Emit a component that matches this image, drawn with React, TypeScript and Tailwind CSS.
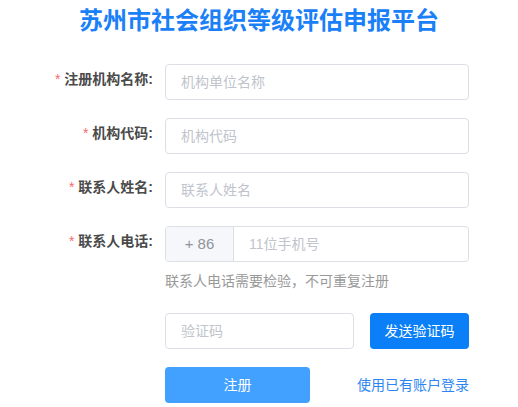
export default function App() {
  const fields = [
    { label: "注册机构名称:", placeholder: "机构单位名称" },
    { label: "机构代码:", placeholder: "机构代码" },
    { label: "联系人姓名:", placeholder: "联系人姓名" },
  ];

  return (
    <div
      className="w-[518px] h-[407px] bg-white overflow-hidden"
      style={{ fontFamily: '"Liberation Sans", "Noto Sans CJK SC", sans-serif' }}
    >
      {/* title */}
      <h1 className="pt-[4px] text-center text-[24px] leading-[34px] font-bold text-[#1a80f8]">
        苏州市社会组织等级评估申报平台
      </h1>

      <div className="mt-[26px] flex flex-col gap-[18px]">
        {fields.map((f) => (
          <div key={f.label} className="flex">
            <label className="w-[153px] mr-[12px] text-right text-[14px] leading-[30px] font-bold text-[#4a4a4a]">
              <span className="text-[#f56c6c] mr-[4px] font-normal">*</span>
              {f.label}
            </label>
            <input
              type="text"
              placeholder={f.placeholder}
              className="w-[304px] h-[36px] px-[15px] border border-[#dcdfe6] rounded-[4px] text-[14px] text-[#606266] placeholder-[#c0c4cc] outline-none"
            />
          </div>
        ))}

        {/* phone */}
        <div className="flex">
          <label className="w-[153px] mr-[12px] text-right text-[14px] leading-[30px] font-bold text-[#4a4a4a]">
            <span className="text-[#f56c6c] mr-[4px] font-normal">*</span>
            联系人电话:
          </label>
          <div className="flex flex-col">
            <div className="flex w-[304px] h-[36px] border border-[#dcdfe6] rounded-[4px] overflow-hidden">
              <div className="w-[68px] bg-[#f5f7fa] border-r border-[#dcdfe6] flex items-center justify-center text-[15px] text-[#909399]">
                + 86
              </div>
              <input
                type="text"
                placeholder="11位手机号"
                className="flex-1 px-[15px] text-[14px] text-[#606266] placeholder-[#c0c4cc] outline-none"
              />
            </div>
            <p className="mt-[9px] text-[14px] leading-[20px] text-[#999999]">
              联系人电话需要检验，不可重复注册
            </p>
          </div>
        </div>
      </div>

      {/* verify code */}
      <div className="mt-[22px] ml-[165px] flex w-[304px] justify-between">
        <input
          type="text"
          placeholder="验证码"
          className="w-[189px] h-[36px] px-[15px] border border-[#dcdfe6] rounded-[4px] text-[14px] text-[#606266] placeholder-[#c0c4cc] outline-none"
        />
        <button className="w-[99px] h-[36px] rounded-[4px] bg-[#0a7ff7] text-white text-[14px]">
          发送验证码
        </button>
      </div>

      <div className="mt-[18px] ml-[165px] flex w-[304px] items-center justify-between">
        <button className="w-[145px] h-[36px] rounded-[4px] bg-[#42a0ff] text-white text-[14px]">
          注册
        </button>
        <a className="text-[14px] text-[#2d86f0] cursor-pointer">使用已有账户登录</a>
      </div>
    </div>
  );
}
